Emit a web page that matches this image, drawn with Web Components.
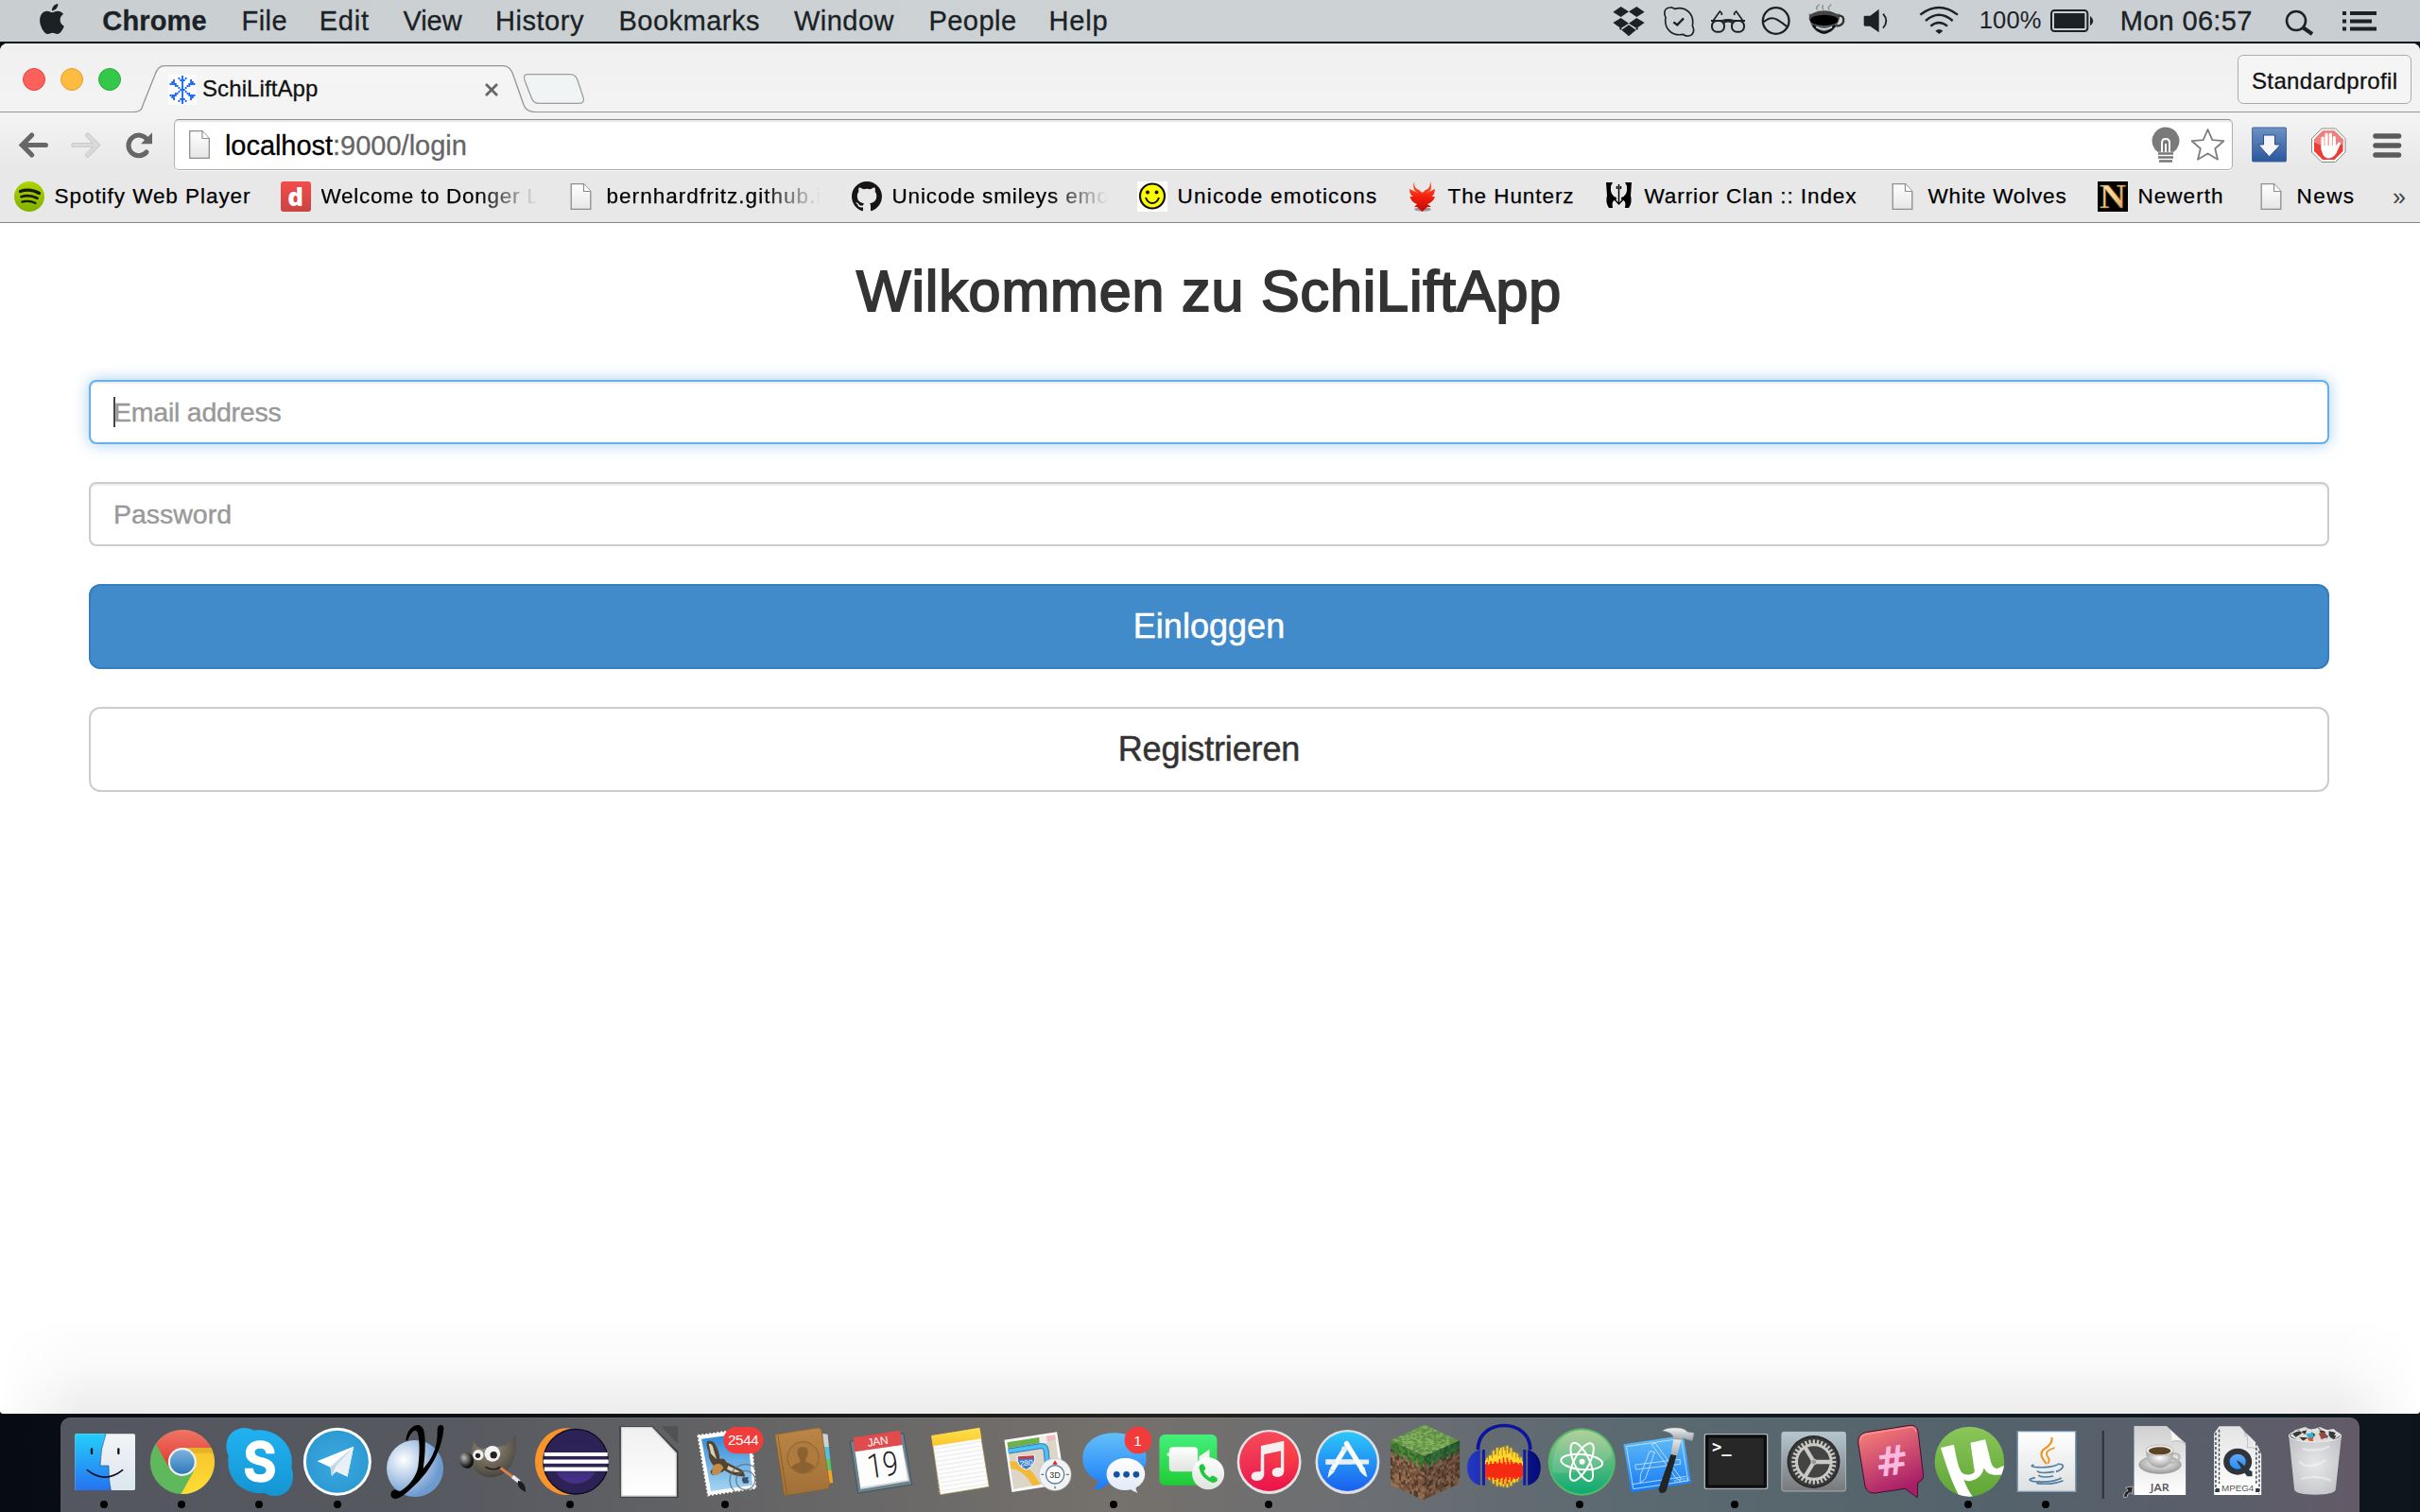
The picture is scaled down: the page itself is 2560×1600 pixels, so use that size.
<!DOCTYPE html>
<html lang="de">
<head>
<meta charset="utf-8">
<title>SchiLiftApp</title>
<style>
html,body{margin:0;height:100%;overflow:hidden}
body{font-family:"Liberation Sans",Arial,sans-serif;background:#0a1016}
</style>
</head>
<body>
<mac-desktop></mac-desktop>
<script>
/* ---------- icon drawings: [viewBox, width, height, markup] ---------- */
const ICONS = {};
const add = (name, x, y, w, h, s, body, sx) => { ICONS[name] = [`${x} ${y} ${w} ${h}`, w/(sx||s), h/s, body]; };
const K = '#1b2226';

/* menu bar */
add('apple',120,0,205,132,3,`<path fill="${K}" transform="translate(117.5,12) scale(3.95,4)" d="M12.152 6.896c-.948 0-2.415-1.078-3.96-1.04-2.04.027-3.91 1.183-4.961 3.014-2.117 3.675-.546 9.103 1.519 12.09 1.013 1.454 2.208 3.09 3.792 3.039 1.52-.065 2.09-.987 3.935-.987 1.831 0 2.35.987 3.96.948 1.637-.026 2.676-1.48 3.676-2.948 1.156-1.688 1.636-3.325 1.662-3.415-.039-.013-3.182-1.221-3.22-4.857-.026-3.04 2.48-4.494 2.597-4.559-1.429-2.09-3.623-2.324-4.39-2.376-2-.156-3.675 1.09-4.61 1.09zM15.53 3.83c.843-1.012 1.4-2.427 1.245-3.83-1.207.052-2.662.805-3.532 1.818-.78.896-1.454 2.338-1.273 3.714 1.338.104 2.715-.688 3.559-1.701"/>`);
add('dropbox',0,0,150,132,3,`<g fill="${K}"><path d="M44 21L69 37L44 54L19 38zM94 21L119 38L94 54L69 37zM44 57L69 74L44 90L19 72zM94 57L119 72L94 90L69 74zM69 79L92 95L69 115L46 95z"/><path d="M40 90L46 93M98 90L92 93" stroke="${K}" stroke-width="5"/></g>`);
add('skypebar',150,0,150,132,3,`<path fill="none" stroke="${K}" stroke-width="5" d="M186 55C178 40 184 24 200 24Q208 23 214 28C250 18 278 45 271 82C280 98 272 114 257 114Q248 115 242 109C205 116 180 90 186 55z"/><path d="M211 70L223 79L243 58" fill="none" stroke="${K}" stroke-width="7"/>`);
add('glasses',300,0,160,132,3,`<g fill="none" stroke="${K}"><path stroke-width="5" d="M336 67L358 36L364 42V48M432 67L410 36L404 42V48"/><rect x="333" y="66" width="39" height="35" rx="16" stroke-width="6"/><rect x="396" y="66" width="39" height="35" rx="16" stroke-width="6"/><path stroke-width="6" d="M330 66H366Q384 60 402 66H438M371 72Q384 63 397 72"/></g>`);
add('roundbar',460,0,150,132,3,`<circle cx="537" cy="66" r="41.500" fill="none" stroke="${K}" stroke-width="7"/><path d="M498 70Q520 50 540 62T574 86" fill="none" stroke="${K}" stroke-width="6"/>`);
add('coffee',610,0,180,132,3,`<defs><filter id="b"><feGaussianBlur stdDeviation="1.500"/></filter></defs><g filter="url(#b)"><path fill="none" stroke="#888d90" stroke-width="4" d="M669 31q-7-7 0-11q6-4 4-7M688 31q-7-9 0-15M707 31q-7-7 0-11q6-4 4-7"/><path d="M642 44Q644 100 690 108Q735 100 740 44z" fill="#555b5e"/><ellipse cx="690" cy="58" rx="48" ry="24" fill="#444"/><ellipse cx="690" cy="64" rx="44" ry="17" fill="#000"/><path d="M655 80Q672 103 690 104Q710 101 724 80" stroke="#111" stroke-width="7" fill="none"/><path d="M665 86Q690 100 715 86" stroke="#cfd3d5" stroke-width="6" fill="none"/><path d="M735 50Q755 48 751 70Q745 84 728 82" fill="none" stroke="#333" stroke-width="7"/></g>`);
add('volume',790,0,160,132,3,`<path fill="${K}" d="M816 53q0-3 4-3H836L864 29V103L836 83H820q-4 0-4-4z"/><path d="M877 44Q897 66 877 89" fill="none" stroke="${K}" stroke-width="5.500"/>`);
add('wifi',950,0,219,132,3,`<g fill="none" stroke="${K}" stroke-width="7"><path d="M993 47Q1052 1 1112 47"/><path d="M1010 66Q1052 29 1096 66"/><path d="M1026 83Q1052 61 1079 83"/></g><path fill="${K}" d="M1041 98Q1053 88 1065 98L1053 108z"/>`);
add('battery',1401,0,222,132,3,`<rect x="1410" y="33" width="115" height="66" rx="10" fill="none" stroke="${K}" stroke-width="6"/><rect x="1419" y="42" width="97" height="48" fill="${K}"/><path fill="${K}" d="M1533 51Q1543 58 1543 66Q1543 74 1533 82z"/>`);
add('search',2410,0,60,44,1,`<circle cx="2429" cy="22" r="10" fill="none" stroke="${K}" stroke-width="2.600"/><path d="M2436 29L2446 36" stroke="${K}" stroke-width="4"/>`);
add('list',2470,0,60,44,1,`<path stroke="${K}" stroke-width="4.200" d="M2478 14h4M2478 22.500h4M2478 30.500h4M2486 14H2514M2486 22.500H2509M2486 30.500H2514"/>`);

/* tab strip and toolbar */
add('tabshape',143,46,422,73,1,`<defs><linearGradient id="g" x1="0" y1="0" x2="0" y2="1"><stop offset="0" stop-color="#f6f6f6"/><stop offset="1" stop-color="#f3f3f3"/></linearGradient></defs><path d="M143 118.300C150 118.300 150 114 152 109L164 79Q167 69.600 174 69.600H532Q539 69.600 542 77L554 111Q557 118.300 565 118.300V120H143z" fill="url(#g)"/><path d="M143 118.300C150 118.300 150 114 152 109L164 79Q167 69.600 174 69.600H532Q539 69.600 542 77L554 111Q557 118.300 565 118.300" fill="none" stroke="#949494" stroke-width="1.300"/>`);
add('newtab',552,76,68,36,1,`<path d="M558 78.600H603Q609 78.600 611 85L617 103Q619 109.400 612 109.400H570Q564 109.400 562 103L555 85Q553 78.600 558 78.600z" fill="#f0f4f5" stroke="#9d9d9d" stroke-width="1.300"/>`);
/* snowflake favicon: a 16x16 pixel bitmap, two device pixels per dot */
const FLAKE=['.......#.......','.....#.#.#.....','..#...###...#..','.##....#....##.','####...#...####','...##..#..##...','.....#.#.#.....','......###......','.....#.#.#.....','...##..#..##...','####...#...####','.##....#....##.','..#...###...#..','.....#.#.#.....','.......#.......'];
add('snow',0,0,30,32,1,`<rect width="30" height="32" fill="#fff"/><g fill="#1a68f2">${FLAKE.map((l,y)=>[...l].map((c,x)=>c==='#'?`<rect x="${x*1.8+1.5}" y="${y*2+1}" width="1.850" height="2.050"/>`:'').join('')).join('')}</g>`);
add('close',510,85,20,18,1,`<path d="M514 88L526 100M526 88L514 100" stroke="#666" stroke-width="2.800"/>`);
add('back',30,357,170,186,3,`<path d="M101 429L70 460.500L101 492M72 460.500H145" fill="none" stroke="#666" stroke-width="15.500" stroke-linecap="round"/>`);
add('forward',200,357,170,186,3,`<path d="M277 429L308 460.500L277 492M306 460.500H233" fill="none" stroke="#c4c4c4" stroke-width="15.500" stroke-linecap="round"/><path d="M277 429L308 460.500L277 492M306 460.500H233" fill="none" stroke="#dadada" stroke-width="11" stroke-linecap="round"/>`);
add('reload',370,357,182,186,3,`<path d="M468 443A32.500 32.500 0 1 0 466 483" fill="none" stroke="#666" stroke-width="15" stroke-linecap="round"/><path d="M484 421V457H448z" fill="#666"/>`);
const page = (w,h)=>`<defs><linearGradient id="g" x1="0" y1="0" x2="0" y2="1"><stop offset="0" stop-color="#fff"/><stop offset="1" stop-color="#e6e6e6"/></linearGradient></defs><path d="M.7 .7H${w-8}L${w-.7} 8.500V${h-.7}H.7z" fill="url(#g)" stroke="#8e8e8e" stroke-width="1.300"/><path d="M${w-8} .7V8.500H${w-.7}" fill="#fff" stroke="#8e8e8e" stroke-width="1.200"/>`;
add('page',0,0,22,30,1,page(22,30));
add('bulb',2272,130,40,46,1,`<path d="M2291 134.500a14.500 14.500 0 0 1 8.500 26.200H2282.500A14.500 14.500 0 0 1 2291 134.500z" fill="#7a7a7a"/><path d="M2287 162V151q0-4 4-4t4 4v11M2291 152v10" stroke="#fff" stroke-width="2" fill="none"/><path d="M2283 162.500H2299M2283 166.500H2299M2284 170.500H2298" stroke="#777" stroke-width="2.400"/>`);
add('star',2312,130,46,46,1,`<path d="M2335.500 137L2340.300 148.200L2352.300 149.200L2343.200 157.200L2346 168.700L2335.500 162.500L2325 168.700L2327.800 157.200L2318.700 149.200L2330.700 148.200z" fill="#fff" stroke="#7d7d7d" stroke-width="1.800" stroke-linejoin="round"/>`);
add('download',2380,118,52,62,1,`<defs><linearGradient id="g" x1="0" y1="0" x2="0" y2="1"><stop offset="0" stop-color="#6c92c4"/><stop offset="1" stop-color="#2b579c"/></linearGradient></defs><rect x="2382.500" y="134" width="36" height="36" rx="1" fill="url(#g)" stroke="#44689f"/><path d="M2394.500 142H2406.500V152H2412.500L2400.500 165L2389 152H2394.500z" fill="#f4f6fa" stroke="#2a4c86"/>`);
add('hand',2432,118,68,62,1,`<path d="M2456 135H2470.500L2481 145.500V160L2470.500 170.500H2456L2445.500 160V145.500z" fill="#fff" stroke="#888"/><path d="M2457 137.500H2469.500L2478.500 146.500V159L2469.500 168H2457L2448 159V146.500z" fill="#ee3b35"/><path d="M2457 137.500H2469.500L2478.500 146.500V151.500Q2463 157.500 2448 149.500V146.500z" fill="#f0807c"/><path d="M2457 157V145M2461 156V141M2465.300 156V141M2469.300 156V144.500" stroke="#fff" stroke-width="3.200" stroke-linecap="round"/><path d="M2455.400 153H2471L2474 149.500Q2476.500 149 2476 151L2471 162Q2467 167 2462 166.500Q2456 165.500 2455.400 153z" fill="#fff"/>`);
add('burger',2500,118,60,62,1,`<g stroke="#5b5b5b" stroke-width="5.600" stroke-linecap="round"><path d="M2513 143H2537.500M2513 153H2537.500M2513 163H2537.500"/></g>`);

/* bookmarks, 32px boxes */
add('spotify',0,0,32,32,1,`<defs><linearGradient id="g" x1="0" y1="0" x2="0" y2="1"><stop offset="0" stop-color="#abd400"/><stop offset="1" stop-color="#83b000"/></linearGradient></defs><circle cx="16" cy="16" r="16" fill="url(#g)"/><g fill="none" stroke="#161a00" stroke-linecap="round"><path d="M6.500 10.500Q17 7 26.500 12.500" stroke-width="3.400"/><path d="M7.500 16.200Q16 13.600 24.500 17.800" stroke-width="2.700"/><path d="M8.300 21.600Q16 19.500 22.500 23" stroke-width="2.200"/></g>`);
add('donger',0,0,32,32,1,`<defs><linearGradient id="g" x1="0" y1="0" x2="0" y2="1"><stop offset="0" stop-color="#f14d4b"/><stop offset="1" stop-color="#c94442"/></linearGradient></defs><rect width="32" height="32" rx="3" fill="url(#g)"/><text x="15.500" y="25.500" text-anchor="middle" font-family="Open Sans" font-weight="800" font-size="26" fill="#fff">d</text>`);
add('pagebm',0,0,32,32,1,`<g transform="translate(4.500,2)">${page(22,28)}</g>`);
add('github',0,0,32,32,1,`<path transform="scale(2)" fill="#161414" d="M8 0C3.580 0 0 3.580 0 8c0 3.540 2.290 6.530 5.470 7.590.4.070.55-.17.55-.38 0-.19-.01-.82-.01-1.490-2.010.37-2.530-.49-2.690-.94-.09-.23-.48-.94-.82-1.130-.28-.15-.68-.52-.01-.53.63-.01 1.080.58 1.230.82.72 1.210 1.870.87 2.330.66.07-.52.28-.87.51-1.070-1.780-.2-3.640-.89-3.640-3.950 0-.87.31-1.590.82-2.150-.08-.2-.36-1.020.08-2.120 0 0 .67-.21 2.200.82.64-.18 1.320-.27 2-.27s1.360.09 2 .27c1.530-1.040 2.200-.82 2.200-.82.44 1.100.16 1.920.08 2.120.51.56.82 1.270.82 2.150 0 3.070-1.870 3.750-3.650 3.950.29.25.54.73.54 1.480 0 1.070-.01 1.930-.01 2.200 0 .21.15.46.55.38A8.010 8.010 0 0 0 16 8c0-4.420-3.580-8-8-8z"/>`);
add('smiley',0,0,32,32,1,`<rect width="32" height="32" fill="#fff"/><circle cx="16" cy="15.500" r="13" fill="#ff0" stroke="#111" stroke-width="2.200"/><circle cx="11" cy="11.500" r="2" fill="#111"/><circle cx="20.500" cy="11.500" r="2" fill="#111"/><path d="M9 17Q11 23 16 23T23 17" fill="none" stroke="#111" stroke-width="2"/>`);
add('hunterz',0,0,32,32,1,`<defs><linearGradient id="g" x1="0" y1="0" x2="0" y2="1"><stop offset="0" stop-color="#ff6a3c"/><stop offset=".5" stop-color="#f4200c"/><stop offset="1" stop-color="#c00808"/></linearGradient></defs><ellipse cx="16" cy="29.500" rx="9" ry="2" fill="#999"/><path fill="url(#g)" d="M7 0Q4 9 11 12L2 8Q2 14 6 16L2.500 16Q4 22 10 24L7 27L10 27L15.500 32L21 27L25 27L21 24Q27 22 29 16L25.500 16Q29 13 29 8L20 12Q28 9 24 0Q24 8 19 9L15.500 12L12 9Q7 8 7 0z"/>`);
add('warrior',0,0,32,32,1,`<path d="M2 1H9L7 5Q6 15 13 17V19Q7 20 9 28H5Q1 22 3 15zM29 1H22L24 5Q25 15 18 17V19Q24 20 22 28H26Q30 22 28 15z" fill="#000"/><path d="M15.500 3V23M13.500 5V8M17.500 5V8M11 19L15.500 24L20 19" stroke="#000" stroke-width="1.500" fill="none"/>`);
add('newerth',0,0,32,32,1,`<defs><linearGradient id="g" x1="0" y1="0" x2="1" y2="1"><stop offset="0" stop-color="#f4e3b0"/><stop offset=".5" stop-color="#f6d48c"/><stop offset="1" stop-color="#d98a4a"/></linearGradient></defs><rect width="32" height="32" fill="#000"/><text x="16" y="27.500" text-anchor="middle" font-family="Liberation Serif" font-weight="700" font-size="36" fill="url(#g)" stroke="#8a4a22" stroke-width=".6" textLength="28" lengthAdjust="spacingAndGlyphs">N</text>`);

/* dock: every drawing fills one 82px wide, 100px tall cell */
const PITCH = 82.16, LEFT = 69;
const dock = (name,i,x0,body)=>{ const L=LEFT+PITCH*i; const s=x0===2000?2.8:3; add(name,(L-x0)*s,90,PITCH*s,300,3,body,s); };
const dockAt = (name,L,body)=>add(name,(L-2000)*2.8,90,82*2.8,300,3,body,2.8);
const lg=(id,a,b,x2=0,y2=1)=>`<linearGradient id="${id}" x1="0" y1="0" x2="${x2}" y2="${y2}"><stop offset="0" stop-color="${a}"/><stop offset="1" stop-color="${b}"/></linearGradient>`;
const rg=(id,a,b,cx=.5,cy=.5,r=.6)=>`<radialGradient id="${id}" cx="${cx}" cy="${cy}" r="${r}"><stop offset="0" stop-color="${a}"/><stop offset="1" stop-color="${b}"/></radialGradient>`;

dock('finder',0,0,`<defs>${lg('a','#24cffc','#2672f0')}${lg('b','#f3f3f5','#dbe7f0')}</defs><rect x="238" y="142" width="191" height="179" rx="5" fill="url(#b)"/><path d="M243 142H336Q318 190 318 243H345Q345 290 352 321H243Q238 321 238 316V147Q238 142 243 142z" fill="url(#a)"/><path d="M336 142Q318 190 318 243H345Q345 290 352 321" fill="none" stroke="#1d4a80" stroke-width="2"/><path d="M291 190V204M376 190V204" stroke="#111" stroke-width="7" stroke-linecap="round"/><path d="M277 257Q333 302 389 257" fill="none" stroke="#0b1420" stroke-width="5" stroke-linecap="round"/>`);
dock('chrome',1,0,`<defs>${lg('r','#ef7565','#e03530')}${lg('y','#f7c52e','#ffdc35')}${lg('c','#7ab3e0','#2f79b8')}</defs><circle cx="579" cy="231" r="102" fill="#5fb85c"/><path d="M579 186H671A102 102 0 0 0 495 174L540 254z" fill="url(#r)"/><path d="M579 186H671A102 102 0 0 1 575 333L620 252z" fill="url(#y)"/><path d="M579 186H671L677 203H600z" fill="#a67a10" opacity=".25"/><circle cx="579" cy="231" r="45" fill="#f2f2f2"/><circle cx="579" cy="231" r="38.500" fill="url(#c)"/>`);
dock('skype',2,0,`<defs>${lg('a','#21b2f2','#1595d3')}</defs><g fill="url(#a)"><path d="M776 123Q795 123 808 131C880 122 938 180 926 250C940 285 925 338 873 339Q855 339 842 330C770 336 716 285 726 212C708 175 725 125 776 123z"/></g><text x="826" y="292" text-anchor="middle" font-family="Inter" font-weight="700" font-size="171" fill="#fff" stroke="#fff" stroke-width="4" textLength="106" lengthAdjust="spacingAndGlyphs">S</text>`);
dock('telegram',3,0,`<defs>${rg('a','#3da9e0','#2a97d2')}</defs><circle cx="1072" cy="230" r="108" fill="#fff"/><circle cx="1072" cy="230" r="99" fill="url(#a)"/><path d="M1009 229L1124 182L1104 278L1068 262L1054 276L1050 248z" fill="#edf4fa"/><path d="M1009 229L1124 182L1046 244z" fill="#fff"/><path d="M1050 248L1124 182L1068 243L1054 276z" fill="#c3d3e2"/><path d="M1068 243L1124 182L1104 278z" fill="#e7f0f7"/>`);
dock('yapp',4,0,`<defs>${rg('a','#fff','#6d9bd0',.3,.35,.65)}</defs><circle cx="1316" cy="252" r="90" fill="url(#a)"/><path d="M1287 162C1290 130 1310 112 1328 114Q1345 118 1347 150C1350 190 1346 225 1342 252C1375 215 1388 180 1387 128Q1388 114 1398 114Q1408 115 1407 126C1400 200 1360 265 1310 310Q1275 345 1256 348Q1238 347 1239 332Q1243 318 1257 320Q1266 326 1273 322C1305 300 1322 270 1326 245C1331 205 1331 165 1325 140Q1321 128 1312 133Q1300 142 1292 164z" fill="#000"/>`);
dock('gimp',5,500,`<defs>${rg('a','#9c917e','#4a453c',.4,.3,.7)}${rg('n','#bbb','#111',.4,.3,.6)}</defs><path d="M3 165Q10 185 32 190L60 182Q118 190 133 145Q145 200 122 240Q95 282 50 280Q10 275 -5 235Q-8 195 3 165z" fill="url(#a)"/><ellipse cx="-20" cy="226" rx="22" ry="26" transform="rotate(-20 -20 226)" fill="url(#n)"/><circle cx="17" cy="209" r="17" fill="#eee"/><circle cx="62" cy="205" r="25" fill="#f2f2f2"/><circle cx="16" cy="211" r="8" fill="#222"/><circle cx="66" cy="209" r="11" fill="#222"/><path d="M40 247Q66 262 88 247" stroke="#1b1714" stroke-width="4" fill="none"/><path d="M88 250L128 280" stroke="#d98445" stroke-width="9"/><path d="M126 277L147 294" stroke="#e8e8e8" stroke-width="12"/><path d="M144 290Q168 295 168 327Q146 318 142 300z" fill="#1a1c1e"/>`);
dock('eclipse',6,500,`<defs>${lg('a','#29204f','#46328c')}</defs><path d="M312 124C240 118 198 175 198 230C198 287 245 341 312 336C265 325 232 290 232 230C232 175 265 137 312 124z" fill="#f7942a"/><circle cx="327" cy="230" r="103" fill="#2c2255" stroke="#0e0a22" stroke-width="4"/><circle cx="327" cy="230" r="70" fill="url(#a)"/><path d="M233 190H421L430 230L421 262H233L224 230z" fill="#2c2255"/><path d="M227 207H428M224 230H431M227 254H428" stroke="#fff" stroke-width="12.500"/>`);
dock('libre',7,500,`<defs>${lg('a','#f0f0f0','#fff')}</defs><path d="M466 118H572L653 198V345H468z" fill="#3d3f41"/><path d="M598 118H652V174z" fill="#4b4b4b" opacity=".7"/><path d="M473 122H569L646 203V339H473z" fill="url(#a)" stroke="#d5d5d5" stroke-width="4"/>`);
dock('mail',8,500,`<defs>${lg('a','#2e86d8','#a5d5f2')}</defs><path d="M716 147L882 125L899 314L748 337z" fill="#fff" stroke="#fff" stroke-width="6" stroke-dasharray="6 6"/><path d="M727 158L873 139L889 305L757 324z" fill="url(#a)"/><path d="M745 165Q765 162 772 178Q783 195 785 222Q800 216 806 232L858 258L866 277Q835 280 800 258Q785 270 760 272L755 262L768 245Q748 225 750 200Q740 180 745 165z" fill="#54432f"/><path d="M750 173Q763 172 765 190L775 223L757 205zM812 243L850 262Q830 268 808 254z" fill="#d8d0bd"/><path d="M762 245Q785 225 797 250L780 272L760 270z" fill="#c58b48"/><g fill="none" stroke="#5b6a73" opacity=".75"><circle cx="867" cy="289" r="50" stroke-width="4"/><circle cx="867" cy="289" r="30" stroke-width="4"/></g><g transform="translate(853,272) scale(1.150)" fill="#3b5166"><path d="M12.150 6.900c-.95 0-2.400-1.080-3.960-1.040-2.040.03-3.910 1.180-4.960 3.010-2.100 3.680-.5 9.100 1.520 12.090 1 1.450 2.200 3.090 3.790 3.040 1.520-.07 2.090-.99 3.930-.99 1.830 0 2.350.99 3.960.95 1.640-.03 2.680-1.480 3.680-2.950 1.150-1.690 1.630-3.320 1.660-3.410-3.200-1.200-4.500-6.500-.6-9.400-1.500-2-3.700-2.400-4.400-2.400-2-.15-3.670 1.090-4.620 1.090z"/></g><rect x="797" y="120" width="126" height="85" rx="42" fill="#f23c3b"/><text x="860" y="177" text-anchor="middle" font-size="46" fill="#fff" textLength="99">2544</text>`);
dock('contacts',9,500,`<defs>${lg('a','#ba8546','#a27037')}</defs><path d="M1112 141L1128 143L1132 183H1112z" fill="#cfd3d4"/><path d="M1112 183L1132 183L1136 222H1112z" fill="#56bfe4"/><path d="M1116 222H1136L1140 258H1116z" fill="#58c867"/><path d="M1120 258H1140L1145 297L1124 300z" fill="#f2a32a"/><path d="M961 144L1095 123Q1108 122 1109 133L1134 303Q1135 315 1124 317L990 338z" fill="url(#a)" stroke="#8a5f2c" stroke-width="2"/><path d="M970 146L999 334" stroke="#8f6128" stroke-width="3"/><circle cx="1050" cy="217" r="50" fill="#ae7a3e" stroke="#8c6130" stroke-width="3"/><path d="M1014 248Q1020 238 1040 232V222Q1031 212 1032 197Q1034 184 1049 184Q1064 184 1065 197Q1066 212 1058 222V231Q1078 236 1086 247Q1050 285 1014 248z" fill="#8c6130"/>`);
dock('calendar',10,500,`<path d="M1197 166L1366 140L1393 303L1222 330z" fill="#6d838e" stroke="#40525c" stroke-width="3"/><path d="M1214 196L1362 176L1385 292L1230 318z" fill="#d8dadb"/><path d="M1212 196L1361 176L1378 288L1230 311z" fill="#fdfdfd"/><path d="M1206 154L1355 131L1362 177L1212 199z" fill="#e14b4b"/><g transform="rotate(-8 1290 220)"><text x="1292" y="178" text-anchor="middle" font-size="36" fill="#fff" textLength="66">JAN</text><text x="1297" y="279" text-anchor="middle" font-family="Roboto" font-weight="300" font-size="108" fill="#222" textLength="98" lengthAdjust="spacingAndGlyphs">19</text></g>`);
let nl=''; for(let k=0;k<11;k++) nl+=`<path d="M${-36+k*1.2} ${190+k*13.5}L${113+k*2} ${166+k*13.5}" stroke="#d6d6d6" stroke-width="1.500"/>`;
dock('notes',11,1000,`<defs>${lg('a','#ffe04a','#fbc62f')}</defs><path d="M-45 148L108 123L138 310L-17 335z" fill="#fdfdfd" stroke="#a89040" stroke-width="2"/>${nl}<path d="M-45 148L108 123L114 157L-40 181z" fill="url(#a)"/>`);
dock('maps',12,1000,`<defs><clipPath id="c"><path d="M196 169L348 145L368 290L216 318z"/></clipPath></defs><path d="M187 161L354 136L380 300L211 327z" fill="#f9f9f9"/><g clip-path="url(#c)"><rect x="180" y="130" width="200" height="200" fill="#ddd6c8"/><path d="M190 168L298 152V172L200 187z" fill="#6bb24a"/><path d="M300 140H350V160L322 166z" fill="#f3b8c0"/><path d="M298 150L320 148L324 170L300 173z" fill="#eee"/><path d="M195 197L300 181Q318 178 320 195L324 240" fill="none" stroke="#2a7bb5" stroke-width="18"/><path d="M195 197L300 181Q318 178 320 195L324 240" fill="none" stroke="#4ec0f5" stroke-width="12"/><path d="M205 240Q240 240 270 275L300 320" fill="none" stroke="#f5b93a" stroke-width="24"/></g><path d="M228 214L283 210Q290 240 257 256Q225 245 228 214z" fill="#3a7fd0" stroke="#fff" stroke-width="3"/><path d="M231 214L280 211L281 220L231 222z" fill="#c93b3b"/><text x="257" y="243" text-anchor="middle" font-size="25" fill="#fff" transform="rotate(-6 257 240)">280</text><circle cx="348" cy="271" r="51" fill="#f1f2f3" stroke="#b9bcbe" stroke-width="2"/><circle cx="348" cy="271" r="29" fill="#fff" stroke="#537f95" stroke-width="4"/><text x="348" y="281" text-anchor="middle" font-size="27" fill="#333">3D</text><path d="M340 239H356L348 226z" fill="#d22"/><path d="M304 271H312M384 271H392M348 308V316" stroke="#444" stroke-width="3"/>`);
dock('messages',13,1000,`<defs>${lg('a','#63c0f8','#1a7cf8')}${lg('b','#fff','#dfe9f5')}</defs><path d="M537 139C598 139 638 172 638 219C638 268 595 300 535 300Q525 300 515 299Q500 319 471 319Q486 305 484 288C450 275 436 248 436 219C436 172 478 139 537 139z" fill="url(#a)"/><path d="M572 219C610 219 634 243 634 270Q634 298 605 313Q604 322 611 329Q598 327 589 319Q580 321 572 321C536 321 512 298 512 270C512 242 536 219 572 219z" fill="url(#b)"/><g fill="#1453a3"><circle cx="544" cy="271" r="10"/><circle cx="575" cy="271" r="10"/><circle cx="606" cy="271" r="10"/></g><circle cx="612" cy="162" r="43" fill="#f23c3b"/><text x="611" y="179" text-anchor="middle" font-size="46" fill="#fff">1</text>`);
dock('facetime',14,1000,`<defs>${lg('a','#45f07d','#1fcc35')}${lg('b','#fff','#dfe3df')}</defs><rect x="680" y="144" width="183" height="161" rx="17" fill="url(#a)"/><rect x="711" y="184" width="91" height="78" rx="12" fill="url(#b)"/><path d="M806 214L839 191V255L806 238z" fill="#f0f3f0"/><rect x="705" y="202" width="6" height="11" fill="#e6fae8"/><circle cx="835" cy="268" r="51" fill="url(#b)"/><path d="M816 238Q806 240 806 250Q812 282 848 297Q858 298 864 290Q866 284 860 280L851 275Q846 273 840 281Q826 273 821 259Q829 254 826 249L821 240Q819 237 816 238z" fill="#21c83f"/>`);
dock('itunes',15,1000,`<defs>${lg('a','#ff6d63','#ec1347',.2,1)}${rg('b','#ff4530','#ea1c52',.9,.4,.6)}</defs><circle cx="1029" cy="231" r="102" fill="#e4e3e6"/><circle cx="1029" cy="230" r="94" fill="url(#a)"/><circle cx="1029" cy="230" r="94" fill="url(#b)" opacity=".4"/><path d="M1003 180L1076 164V262Q1074 279 1054 279Q1038 277 1038 263Q1040 249 1060 249H1066V196L1013 207V272Q1010 290 990 291Q971 289 972 275Q974 262 994 262H1002z" fill="#f4eff1"/>`);
dock('appstore',16,1000,`<defs>${lg('a','#2cc8fa','#1b5ff0')}</defs><circle cx="1275" cy="231" r="102" fill="#dfe0e4"/><circle cx="1275" cy="230" r="94" fill="url(#a)"/><path d="M1206 231H1343" stroke="#e9eef5" stroke-width="15"/><path d="M1272 173L1322 255" stroke="#fff" stroke-width="16" stroke-linecap="round"/><path d="M1313 258L1329 249L1338 279Q1326 276 1313 258z" fill="#f0f3f8"/><path d="M1265 192L1226 257" stroke="#fff" stroke-width="16"/><path d="M1218 254L1234 262L1212 282z" fill="#fff"/><circle cx="1265" cy="190" r="9" fill="#e5ebf3"/><path d="M1206 231H1238M1248 231H1290" stroke="#e9eef5" stroke-width="15"/>`);
/* cube faces are 16x16 grids of deterministic speckles */
let seed=7; const rnd=()=>(seed=(seed*1103515245+12345)%2147483648)/2147483648;
const pick=a=>a[Math.floor(rnd()*a.length)];
const face=(m,pal,grass)=>{let o='';for(let y=0;y<16;y++)for(let x=0;x<16;x++){const g=grass&&y<3+((x*7)%3);o+=`<rect x="${x}" y="${y}" width="1.060" height="1.060" fill="${pick(g?grass:pal)}"/>`;}return `<g transform="matrix(${m})">${o}</g>`;};
const G=['#6fa24a','#7fb356','#5f9140','#8abb63','#689a45'];
dock('cube',17,1500,face('6.75,-3.125,6.75,3.125,-88,163',G)+face('6.75,3.125,0,8.75,-88,163',['#7a543b','#8d6548','#64452f','#9b7252','#54392a'],['#3f7a2c','#2f6a26','#4d8a37'])+face('6.94,-3.125,0,8.500,20,213',['#5d402d','#73503a','#4a3323','#83604a'],['#245c2a','#2f6d35','#1d5024']));
let wv='',wr=''; for(let k=0;k<30;k++){const x=215+k*4,e=Math.sin(Math.PI*(k+3)/35),h=14+60*e*(.72+.28*Math.sin(k*2.3)),q=9+h*.36*(.75+.4*Math.sin(k*1.9));wv+=`M${x} ${252-h}V${256+h*.78}`;wr+=`M${x} ${254-q}V${264+q}`;}
dock('audacity',18,1500,`<defs>${lg('a','#2438c4','#050a78',1,0)}<filter id="b"><feGaussianBlur stdDeviation="3"/></filter></defs><path d="${wv}" stroke="#f5b700" stroke-width="9" opacity=".6" filter="url(#b)"/><path d="${wv}" stroke="#ffd829" stroke-width="4.500"/><path d="${wr}" stroke="#f52a12" stroke-width="4.800"/><path d="M190 192C190 90 356 90 356 192" fill="none" stroke="#0a149c" stroke-width="11"/><path d="M197 192V306Q156 295 156 247Q158 203 197 192zM348 192V306Q389 295 389 247Q387 203 348 192z" fill="url(#a)"/><path d="M208 192V305M338 192V305" stroke="#101da8" stroke-width="9"/>`);
dock('atom',19,1500,`<defs>${lg('a','#a6c98c','#0bab72')}</defs><circle cx="520" cy="231" r="107" fill="#57b86a"/><circle cx="520" cy="231" r="101" fill="url(#a)"/><path d="M425 265Q430 130 520 130Q600 132 618 205Q560 275 425 265z" fill="#fff" opacity=".12"/><g fill="none" stroke="#fff" stroke-width="6"><ellipse cx="520" cy="231" rx="66" ry="24" transform="rotate(5 520 231)"/><ellipse cx="520" cy="231" rx="66" ry="24" transform="rotate(65 520 231)"/><ellipse cx="520" cy="231" rx="66" ry="24" transform="rotate(118 520 231)"/></g><circle cx="521" cy="230" r="9" fill="#fff"/>`);
dock('xcode',20,1500,`<defs>${lg('a','#63bdf5','#1579f5')}${lg('m','#f2f2f2','#9aa2a8')}</defs><path d="M653 175L843 147L868 298L677 328z" fill="url(#a)"/><g fill="none" stroke="#c9e7fb" stroke-width="2.500"><path d="M662 182L836 157L858 291L684 317zM680 302L852 277"/><path d="M742 175L754 171L835 283L832 290L820 283zM736 197L752 200L722 285L706 297L707 272zM690 240L832 223L833 238L692 255z"/></g><text x="838" y="294" text-anchor="middle" font-size="15" fill="#bfe1fa" transform="rotate(-8 838 290)">XCODE</text><path d="M813 150L838 155L820 222L801 219z" fill="url(#m)"/><path d="M803 207L821 211L789 322Q785 332 773 330Q763 326 765 316z" fill="#222426"/><path d="M776 132Q790 121 820 123Q845 122 857 136L877 139L872 164L853 160Q843 152 835 160L812 158Q813 138 776 132z" fill="url(#m)" stroke="#7c858c" stroke-width="1.500"/>`);
dock('terminal',21,1500,`<rect x="909" y="141" width="203" height="177" rx="6" fill="#a9b3b7"/><rect x="913" y="145" width="195" height="169" rx="4" fill="#0c0c0c"/><rect x="923" y="155" width="175" height="149" fill="#272727"/><text x="934" y="201" font-family="DejaVu Sans Mono" font-weight="700" font-size="52" fill="#fff" textLength="62" lengthAdjust="spacingAndGlyphs">&gt;_</text>`);
let teeth=''; for(let k=0;k<32;k++) teeth+=`<rect x="1254.500" y="160" width="7" height="16" fill="#c4c4c0" transform="rotate(${k*11.25} 1258 231)"/>`;
dock('prefs',22,1500,`<defs>${lg('a','#b5c6cf','#77797b')}</defs><rect x="1156" y="136" width="203" height="188" rx="7" fill="url(#a)" stroke="#c3ced4" stroke-width="2"/><circle cx="1257" cy="231" r="84" fill="#2b2b2c"/><circle cx="1257" cy="231" r="78" fill="#3a3a3b"/>${teeth}<circle cx="1258" cy="231" r="55" fill="#444" stroke="#c9c9c5" stroke-width="9"/><path d="M1258 231L1310 231M1258 231L1231 186M1258 231L1231 276" stroke="#c9c9c5" stroke-width="13"/><circle cx="1258" cy="231" r="9" fill="#999" stroke="#ddd" stroke-width="2"/>`);
dock('textual',23,1500,`<defs>${lg('a','#ff8a7a','#a81e68',.4,1)}</defs><path d="M1420 137L1560 115Q1582 113 1586 134L1603 275Q1603 290 1585 297L1584 344L1545 316L1450 330Q1425 332 1418 309L1396 170Q1395 143 1420 137z" fill="url(#a)" stroke="#3f1030" stroke-width="3"/><path d="M1402 165Q1404 147 1423 143L1560 121Q1576 119 1580 135" fill="none" stroke="#ff9d93" stroke-width="3"/><text x="1503" y="273" text-anchor="middle" font-family="DejaVu Sans" font-weight="700" font-size="128" fill="#fbb9e2" transform="rotate(-8 1503 225)">#</text>`);
dock('utorrent',24,2000,`<defs>${lg('a','#8bc65a','#5fa536')}<clipPath id="c"><ellipse cx="233" cy="230" rx="103" ry="111"/></clipPath></defs><ellipse cx="233" cy="230" rx="103" ry="111" fill="url(#a)"/><g clip-path="url(#c)"><path d="M148 186L187 176Q197 240 208 262Q222 279 246 266Q250 262 246 245L236 170L280 160L294 220Q300 255 316 252L340 240V268Q318 276 296 270Q284 268 276 250Q270 284 238 291Q222 294 216 286Q226 320 246 345L206 345Q180 300 148 186z" fill="#fff"/></g>`);
dock('java',25,2000,`<defs>${lg('a','#fff','#dfe0e2')}</defs><rect x="376" y="134" width="172" height="191" fill="url(#a)" stroke="#7d9cb5" stroke-width="4"/><g fill="none" stroke="#f0921e" stroke-width="6"><path d="M477 153Q482 172 455 190Q435 206 462 237"/><path d="M486 186Q455 196 464 212Q474 225 466 236" stroke-width="5"/></g><g fill="none" stroke="#4d7fa3" stroke-width="5"><path d="M424 240Q408 246 436 248Q470 250 494 240M494 238Q514 236 510 248Q504 258 490 262M434 259Q440 270 484 262M438 273Q446 283 482 276M428 281Q398 288 424 293Q480 298 506 282M432 299Q480 305 511 290"/></g>`);
add('sep',574.5,90,106,300,3,`<rect x="627" y="132" width="6" height="216" fill="#2b363d"/>`,2.8);
dockAt('jar',2243,`<defs>${lg('a','#cfcfcf','#fff')}${rg('s','#fff','#9b9b9b',.5,.4,.6)}</defs><path d="M721 117H817L874 172V336H721z" fill="url(#a)"/><path d="M817 117Q836 130 832 166Q862 158 874 178Z" fill="#f6f6f6"/><path d="M832 166Q862 158 874 178" stroke="#aaa" fill="none" stroke-width="2"/><ellipse cx="798" cy="240" rx="62" ry="28" fill="url(#s)" stroke="#888" stroke-width="2"/><path d="M828 206Q858 200 855 219Q850 234 825 234" fill="none" stroke="#bbb" stroke-width="7"/><path d="M756 196Q758 248 797 250Q836 248 838 196z" fill="url(#s)"/><ellipse cx="797" cy="194" rx="41" ry="17" fill="#eee" stroke="#aaa" stroke-width="2"/><ellipse cx="797" cy="196" rx="33" ry="12" fill="#5b4526"/><text x="797" y="323" text-anchor="middle" font-family="Open Sans" font-weight="600" font-size="34" fill="#555" textLength="56" lengthAdjust="spacingAndGlyphs">JAR</text><path d="M690 343Q692 324 703 322L696 312L717 309L715 333L710 328Q700 332 700 343z" fill="#222" stroke="#ddd" stroke-width="2"/>`);
dockAt('mpeg',2325,`<defs>${lg('a','#e4e4e4','#fff')}${lg('q','#75a9f0','#1090ff')}</defs><path d="M973 118H1034L1048 134L1066 152L1084 172L1098 206V336H958V140L966 128z" fill="url(#a)"/><path d="M1034 118Q1052 130 1050 152M1048 134Q1062 150 1056 186Q1084 180 1098 208" fill="none" stroke="#aaa" stroke-width="2"/><path d="M963 138V332M973 128V300M1083 170V300M1092 196V332" stroke="#3d4a51" stroke-width="4" stroke-dasharray="9 6"/><path d="M963 315h11v12h-11zM1081 315h11v12h-11z" fill="#2c3a45"/><circle cx="1028" cy="230" r="33" fill="url(#q)" stroke="#30353c" stroke-width="18"/><path d="M1024 226Q1040 232 1052 250L1071 262V277H1056Q1036 250 1024 226z" fill="#30353c"/><text x="1028" y="323" text-anchor="middle" font-size="29" fill="#555" textLength="96" lengthAdjust="spacingAndGlyphs">MPEG4</text>`);
dockAt('trash',2407,`<defs>${rg('b','#eeeff0','#bfc2c5',.5,.5,.7)}</defs><path d="M1183 148L1198 130L1228 120L1246 130L1272 120L1292 130L1312 126L1334 146L1300 168H1215z" fill="#dedcd8"/><path d="M1190 142l20-14 8 12-18 12zM1216 136l18-10-6 18zM1266 122l22 14-10 14zM1298 132l20 6-8 18-12-8zM1210 152l26 2-14 10zM1246 136l12 8-8 14zM1300 152l20-6-6 14z" fill="#3a3735"/><path d="M1230 142L1250 139L1255 153L1238 156z" fill="#27b8d8"/><path d="M1234 156L1250 152L1252 166L1240 164z" fill="#e4502e"/><path d="M1268 140l18-4 8 16-18 8z" fill="#a0463c"/><path d="M1286 144l10 4-4 10z" fill="#3a5c9c"/><path d="M1179 143Q1185 166 1257 168Q1330 166 1336 143L1318 320Q1312 334 1257 335Q1202 334 1196 320z" fill="url(#b)" opacity=".95"/><path d="M1220 190Q1260 200 1300 182M1210 230Q1240 260 1290 225M1215 285Q1260 270 1305 290" stroke="#fff" stroke-width="7" fill="none" opacity=".4"/><ellipse cx="1257" cy="148" rx="77" ry="20" fill="none" stroke="#e9ecee" stroke-width="3"/>`);

/* ---------- components ---------- */
const define=(name,html,after)=>{
  const t=document.createElement('template'); t.innerHTML=html;
  customElements.define(name,class extends HTMLElement{
    connectedCallback(){ if(this.shadowRoot) return; this.attachShadow({mode:'open'}).append(t.content.cloneNode(true)); if(after) after.call(this,this.shadowRoot); }
  });
};

/* <ui-icon name> draws one entry of ICONS at its natural size */
define('ui-icon','<style>:host{display:block;flex:none}svg{display:block;overflow:visible;font-family:"Liberation Sans",Arial,sans-serif}</style>',function(r){
  const [vb,w,h,body]=ICONS[this.getAttribute('name')];
  this.style.width=w+'px';
  r.innerHTML+=`<svg viewBox="${vb}" width="${w}" height="${h}" preserveAspectRatio="none">${body}</svg>`;
});

/* <fit-text w> tracks its text so that it takes exactly w pixels */
define('fit-text','<style>:host{display:block;flex:none;white-space:pre}span{display:inline-block}</style><span><slot></slot></span>',function(r){
  const w=+this.getAttribute('w'), n=this.textContent.length, s=r.querySelector('span');
  if(w){ s.style.letterSpacing=((w-s.getBoundingClientRect().width)/n)+'px'; this.style.width=w+'px'; }
});

define('menu-item','<style>:host{display:block;flex:none;font-size:29px;line-height:45px;-webkit-text-stroke:.3px}</style><slot></slot>');

define('mac-menubar',`<style>
:host{display:flex;height:44px;padding-left:40px;background:linear-gradient(90deg,#c9ced1,#ccd1d3 35%,#cdd2d5 70%,#c8cdd2);color:#1b2226;border-bottom:2px solid #0b151d;align-items:center}
.b{font-weight:700}.pct{font-size:25.500px;line-height:43px;width:72px;margin:-1px 0 0 1px}
</style>
<ui-icon name="apple"></ui-icon>
<menu-item class="b" style="width:147.200px"><fit-text w="110.500">Chrome</fit-text></menu-item>
<menu-item style="width:82.200px"><fit-text w="48.500">File</fit-text></menu-item>
<menu-item style="width:88.800px"><fit-text w="53">Edit</fit-text></menu-item>
<menu-item style="width:97.500px"><fit-text w="62">View</fit-text></menu-item>
<menu-item style="width:130.500px"><fit-text w="94">History</fit-text></menu-item>
<menu-item style="width:185.500px"><fit-text w="149.500">Bookmarks</fit-text></menu-item>
<menu-item style="width:142.500px"><fit-text w="106">Window</fit-text></menu-item>
<menu-item style="width:127px"><fit-text w="93">People</fit-text></menu-item>
<menu-item style="width:590.500px"><fit-text w="63">Help</fit-text></menu-item>
<ui-icon name="dropbox"></ui-icon><ui-icon name="skypebar"></ui-icon><ui-icon name="glasses"></ui-icon><ui-icon name="roundbar"></ui-icon><ui-icon name="coffee"></ui-icon><ui-icon name="volume"></ui-icon><ui-icon name="wifi" style="margin-right:3px"></ui-icon>
<div class="pct"><fit-text w="66">100%</fit-text></div>
<ui-icon name="battery" style="margin-left:1px"></ui-icon>
<menu-item style="width:167px;margin-left:2px"><fit-text w="140">Mon 06:57</fit-text></menu-item>
<ui-icon name="search"></ui-icon><ui-icon name="list"></ui-icon>`);

define('window-lights',`<style>
:host{display:flex;gap:16px;align-items:center;padding:4px 0 0 24px;box-sizing:border-box;width:143px;height:72.500px;flex:none;border-bottom:1px solid #949494}
i{width:24px;height:24px;border-radius:50%;box-sizing:border-box;border:1px solid}
.r{background:#fc605b;border-color:#e2463f}.y{background:#fdbc40;border-color:#dfa033}.g{background:#34c84a;border-color:#2aa937}
</style><i class="r"></i><i class="y"></i><i class="g"></i>`);

define('browser-tab',`<style>
:host{display:grid;width:422px;height:73px;flex:none;z-index:1;margin-bottom:-1px}
:host>*{grid-area:1/1}
.c{display:flex;align-items:center;padding:24px 0 0 35px;font-size:24px;line-height:30px;color:#111;box-sizing:border-box;height:73px;-webkit-text-stroke:.3px}
.t{width:296px;margin-left:6px;margin-bottom:1px}
</style><ui-icon name="tabshape"></ui-icon><div class="c"><ui-icon name="snow"></ui-icon><div class="t"><fit-text w="122.500"><slot></slot></fit-text></div><ui-icon name="close"></ui-icon></div>`,function(r){
  /* the slotted title is measured through its host */
  const f=r.querySelector('fit-text').shadowRoot.querySelector('span');
  f.style.letterSpacing='0px';
  f.style.letterSpacing=((122.5-f.getBoundingClientRect().width)/this.textContent.length)+'px';
});

define('tab-strip',`<style>
:host{display:flex;height:73px;align-items:flex-start}
.rest{flex:1;display:flex;justify-content:space-between;height:72.500px;box-sizing:border-box;border-bottom:1px solid #949494}
.rest ui-icon{margin:30px 0 0 -13px;z-index:2}
.profile{margin:12px 9px 0 0;width:184px;height:52px;box-sizing:border-box;border:1.500px solid #ababab;border-radius:6px;background:#f5f5f5;font-size:24px;line-height:53px;padding-left:14px;color:#111;-webkit-text-stroke:.3px}
</style><window-lights></window-lights><browser-tab>SchiLiftApp</browser-tab>
<div class="rest"><ui-icon name="newtab"></ui-icon><div class="profile"><fit-text w="154.500">Standardprofil</fit-text></div></div>`);

define('address-bar',`<style>
:host{display:flex;align-items:center;width:2178px;height:54px;box-sizing:border-box;margin-top:7px;background:#fff;border:1.500px solid #b0b0b0;border-top-color:#929292;border-radius:5px;box-shadow:inset 0 2px 2px rgba(0,0,0,.1),0 1px 0 #f8f8f8;padding-left:15px;font-size:29px;line-height:50px}
.u{display:flex;flex:1;margin:2px 0 0 16px;color:#000;-webkit-text-stroke:.3px}.g{color:#666}
ui-icon[name=star]{margin-right:3px}
</style><ui-icon name="page"></ui-icon><div class="u"><fit-text w="114">localhost</fit-text><fit-text class="g" w="142">:9000/login</fit-text></div><ui-icon name="bulb"></ui-icon><ui-icon name="star"></ui-icon>`);

define('tool-bar',`<style>:host{display:flex;height:61px;align-items:flex-start}ui-icon[name=download]{margin-left:18px}</style>
<ui-icon name="back" style="margin-left:10px"></ui-icon><ui-icon name="forward"></ui-icon><ui-icon name="reload"></ui-icon>
<address-bar></address-bar><ui-icon name="download"></ui-icon><ui-icon name="hand"></ui-icon><ui-icon name="burger"></ui-icon>`);

define('bookmark-item',`<style>
:host{display:flex;align-items:center;flex:none;gap:10.500px;font-size:22.500px;line-height:56px;color:#000;-webkit-text-stroke:.25px}
:host([fade]) .t{-webkit-mask-image:linear-gradient(90deg,#000 72%,transparent 99%)}
</style>`,function(r){
  r.innerHTML+=`<ui-icon name="${this.getAttribute('icon')}"></ui-icon><div class="t"><fit-text w="${this.getAttribute('w')}">${this.getAttribute('label')}</fit-text></div>`;
});

define('bookmark-bar',`<style>:host{display:flex;height:55px;align-items:center;padding-left:15px;border-bottom:1.500px solid #858585}
.more{font-size:25px;margin-left:auto;padding-right:15px;color:#444;line-height:48px}
</style>`,function(r){
  const items=[['spotify','Spotify Web Player',282,208],['donger','Welcome to Donger L',302,231,1],['pagebm','bernhardfritz.github.i',302,228,1],['github','Unicode smileys emo',302,230,1],['smiley','Unicode emoticons',286,212],['hunterz','The Hunterz',208,134],['warrior','Warrior Clan :: Index',300,225],['pagebm','White Wolves',222,147],['newerth','Newerth',168,91],['pagebm','News',110,62]];
  r.innerHTML+=items.map(([ic,t,cell,w,fade])=>`<bookmark-item icon="${ic}" label="${t}" w="${w}" style="width:${cell}px"${fade?' fade':''}></bookmark-item>`).join('')+'<div class="more">»</div>';
});

define('form-field',`<style>
:host{display:flex;align-items:center;height:68px;box-sizing:border-box;border:2px solid #ccc;border-radius:8px;padding-left:24px;font-size:28.500px;line-height:40px;color:#999;background:#fff;box-shadow:inset 0 2px 2px rgba(0,0,0,.075);-webkit-text-stroke:.4px}
:host([focused]){border-color:#66afe9;box-shadow:inset 0 2px 2px rgba(0,0,0,.075),0 0 16px rgba(102,175,233,.6)}
i{display:none;width:2px;height:32px;background:#444;margin-right:-2px;margin-top:-1px}:host([focused]) i{display:block}
</style><i></i><slot></slot>`);

define('form-button',`<style>
:host{display:flex;align-items:center;justify-content:center;height:90px;box-sizing:border-box;border:2px solid #ccc;border-radius:12px;font-size:36px;line-height:48px;color:#333;background:#fff;-webkit-text-stroke:.5px}
:host([primary]){background:#428bca;border-color:#357ebd;color:#fff}
</style><slot></slot>`);

define('login-page',`<style>
:host{display:flex;flex-direction:column;gap:40px;flex:1;padding:33px 96px 0 94px;background:#fff;box-sizing:border-box}
h1{margin:0 0 14px;height:79px;display:flex;justify-content:center;font-size:61px;font-weight:400;line-height:78px;color:#333;-webkit-text-stroke:2px #333}
.shade{margin:auto -96px 0 -94px;height:100px;background:linear-gradient(rgba(0,0,0,0),rgba(0,0,0,.025) 50%,rgba(0,0,0,.075));-webkit-mask-image:linear-gradient(90deg,transparent,#000 90px,#000 2470px,transparent)}
</style><h1><fit-text w="746">Wilkommen zu SchiLiftApp</fit-text></h1>
<form-field focused><fit-text w="177.500">Email address</fit-text></form-field>
<form-field><fit-text w="125">Password</fit-text></form-field>
<form-button primary><fit-text w="160.500">Einloggen</fit-text></form-button>
<form-button><fit-text w="192.500">Registrieren</fit-text></form-button><div class="shade"></div>`);

define('browser-window',`<style>
:host{display:flex;flex-direction:column;height:1450px;border-radius:8px 8px 4px 4px;overflow:hidden;background:#fff}
.chrome{height:190px;background:linear-gradient(#f0f0f0,#f3f3f3 72px,#f3f3f3 80px,#e8e8e8 132px,#e8e8e8)}
</style><div class="chrome"><tab-strip></tab-strip><tool-bar></tool-bar><bookmark-bar></bookmark-bar></div><login-page></login-page>`);

define('dock-app',`<style>
:host{display:grid;flex:none;height:100px}:host>*{grid-area:1/1}
i{display:none;width:8px;height:8px;border-radius:50%;background:#000;place-self:end center;margin-bottom:4px}
:host([running]) i{display:block}
</style>`,function(r){ r.innerHTML+=`<ui-icon name="${this.getAttribute('app')}"></ui-icon><i></i>`; });

define('mac-dock',`<style>
:host{display:flex;height:100px;margin:4px 64px 0;padding-left:5px;border-radius:10px 10px 0 0;background:linear-gradient(90deg,#54575f,#55585f 15%,#696868 35%,#75716c 46%,#6a6e73 58%,#5b6970 68%,#54626b 84%,#5a5e6a 94%,#635a67);box-shadow:inset 0 1px 0 rgba(255,255,255,.05)}
</style>`,function(r){
  const apps='finder* chrome* skype* telegram* yapp gimp eclipse* libre mail* contacts calendar notes maps messages* facetime itunes* appstore cube audacity atom* xcode terminal* prefs textual utorrent* java* sep jar mpeg trash';
  r.innerHTML+=apps.split(' ').map(a=>`<dock-app app="${a.replace('*','')}"${a.endsWith('*')?' running':''}></dock-app>`).join('');
});

define('mac-desktop',`<style>
:host{display:flex;flex-direction:column;width:2560px;height:1600px;overflow:hidden;background:linear-gradient(90deg,#070c12,#0a0f14 20%,#1c1b1a 40%,#24201d 50%,#111a20 65%,#0c151b)}
</style><mac-menubar></mac-menubar><browser-window></browser-window><mac-dock></mac-dock>`);
</script>
</body>
</html>
